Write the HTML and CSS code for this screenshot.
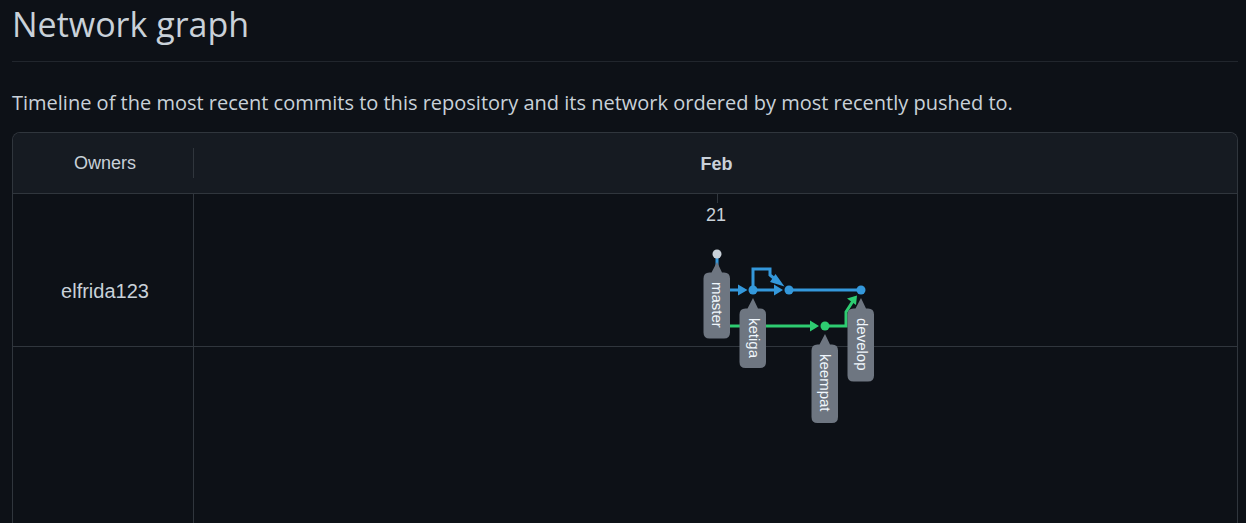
FILE: index.html
```html
<!DOCTYPE html>
<html lang="en">
<head>
<meta charset="utf-8">
<title>Network graph</title>
<link rel="stylesheet" href="styles.css">
</head>
<body>
<main class="page">
  <h1 class="title">Network graph</h1>
  <p class="intro">Timeline of the most recent commits to this repository and its network ordered by most recently pushed to.</p>
  <section class="network" aria-label="Commit network">
    <div class="head owners">Owners</div>
    <div class="head month">Feb</div>
    <div class="lane owner">elfrida123</div>
    <div class="lane track"></div>
    <div class="rest"></div>
    <svg class="graph" width="320" height="240" viewBox="557 194 320 240" role="img" aria-label="Branches master, ketiga, keempat and develop">
      <path class="tick" d="M717.5 194v9"/>
      <text class="day" x="716" y="221">21</text>
      <g class="blue">
        <path class="edge" d="M717 254v36h22M753 290h22M789 290h72M753 290v-21h17v6l6 5"/>
        <path class="arrow" d="M738 284.500l9.500 5.500-9.500 5.500zM774 284.500l9 5.500-9 5.500zM784.500 286.500l-14.500-4.500 5.500-8z"/>
        <circle cx="753" cy="290" r="4.500"/><circle cx="789" cy="290" r="4.500"/><circle cx="861" cy="290" r="4.500"/>
      </g>
      <g class="green">
        <path class="edge" d="M717 326h94M825 326h21v-14l7-11"/>
        <path class="arrow" d="M810 320.500l9 5.500-9 5.500zM857 295.500l-10 3 9 6.500z"/>
        <circle cx="825" cy="326" r="4.500"/>
      </g>
      <circle class="root" cx="717" cy="254" r="4.500"/>
      <g class="tag">
        <path d="M717 262l5 10.500h2q6 0 6 6v54q0 6-6 6h-14.500q-6 0-6-6v-54q0-6 6-6h2z"/>
        <text transform="translate(712 282) rotate(90)">master</text>
        <path d="M753 298l5 10.500h2q6 0 6 6v47.500q0 6-6 6h-14.500q-6 0-6-6v-47.500q0-6 6-6h2z"/>
        <text transform="translate(749 318) rotate(90)">ketiga</text>
        <path d="M825 334l5 10.500h2q6 0 6 6v66.500q0 6-6 6h-14.500q-6 0-6-6v-66.500q0-6 6-6h2z"/>
        <text transform="translate(820 354) rotate(90)">keempat</text>
        <path d="M861 298l5 10.500h2q6 0 6 6v61q0 6-6 6h-14.500q-6 0-6-6v-61q0-6 6-6h2z"/>
        <text transform="translate(857 318) rotate(90)">develop</text>
      </g>
    </svg>
  </section>
</main>
</body>
</html>
```
FILE: styles.css
```css
* { box-sizing: border-box; }
body {
  margin: 0;
  background: #0d1117;
  color: #c9d1d9;
  font-family: "Segoe UI", "Open Sans", "Noto Sans", sans-serif;
}
.page {
  display: flex;
  flex-direction: column;
  min-height: 100vh;
  padding: 0 8px 0 12px;
}
.title {
  margin: 0;
  padding-bottom: 13px;
  border-bottom: 1px solid #21262d;
  font-size: 34px;
  line-height: 48px;
  font-weight: 400;
}
.intro {
  margin: 25px 0 13px;
  font-size: 20px;
  line-height: 32px;
}
.network {
  flex: 1;
  display: grid;
  grid-template-columns: 181px 1fr;
  grid-template-rows: 61px 153px 1fr;
  border: 1px solid #30363d;
  border-bottom: 0;
  border-radius: 8px 8px 0 0;
  overflow: hidden;
  font-family: "Liberation Sans", Arial, sans-serif;
}
.head {
  display: flex;
  align-items: center;
  justify-content: center;
  background: #161b22;
  border-bottom: 1px solid #30363d;
  font-size: 18px;
}
.owners {
  padding-right: 1px;
  padding-left: 4px;
  background: linear-gradient(#30363d, #30363d) right center / 1px 30px no-repeat #161b22;
}
.month { padding: 2px 0 0 2px; font-weight: 700; }
.lane { grid-row: 2; border-bottom: 1px solid #30363d; }
.owner {
  display: flex;
  align-items: center;
  justify-content: center;
  padding: 42px 0 0 4px;
  border-right: 1px solid #30363d;
  font-size: 20px;
}
.track { grid-column: 2; }
.rest { grid-area: 3 / 1; border-right: 1px solid #30363d; }
.graph {
  grid-area: 2 / 2 / 4 / 3;
  justify-self: center;
  margin-left: 3px;
}
.tick { stroke: #30363d; }
.day { fill: #c9d1d9; font-size: 18px; text-anchor: middle; }
.blue { fill: #3498db; }
.green { fill: #2ecc71; }
.edge { fill: none; stroke-width: 3; }
.blue .edge { stroke: #3498db; }
.green .edge { stroke: #2ecc71; }
.root { fill: #c9d1d9; }
.tag path { fill: #6e7681; }
.tag text { fill: #f0f6fc; font-size: 15px; }
```
